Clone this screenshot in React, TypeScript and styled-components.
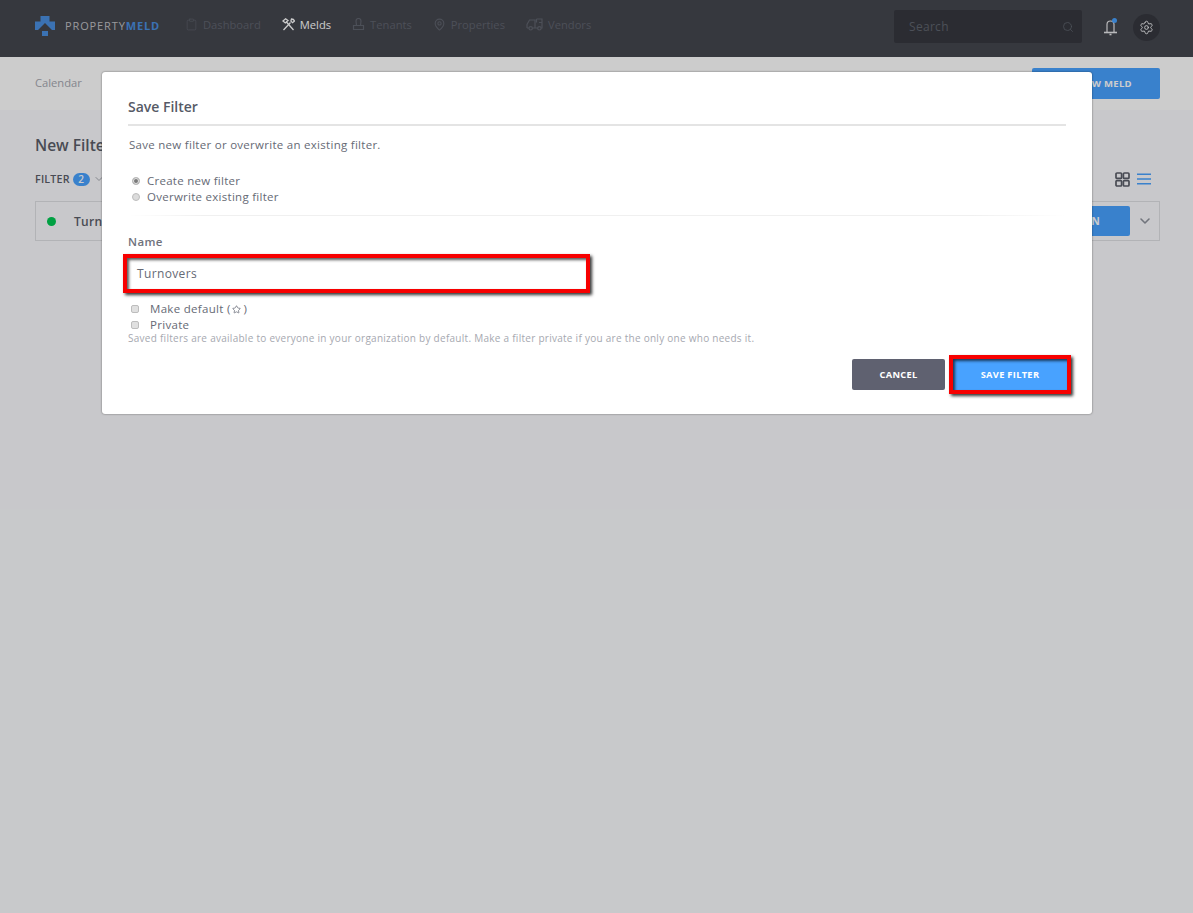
import * as React from "react";
import styled, { createGlobalStyle } from "styled-components";
import { Search, Settings, ChevronDown, MapPin, Clipboard, Star } from "lucide-react";

const Global = createGlobalStyle`
  html, body { margin: 0; padding: 0; }
  body {
    font-family: "Open Sans", "Noto Sans", sans-serif;
    background: #fafbfe;
    min-height: 913px;
    overflow: hidden;
  }
  * { box-sizing: border-box; }
`;

const Page = styled.div`
  position: relative;
  height: 913px;
`;

const Header = styled.header`
  height: 57px;
  background: #44464e;
  display: flex;
  align-items: center;
  padding: 0 33px 8px 35px;
`;

const Brand = styled.div`
  display: flex;
  align-items: center;
  width: 150px;
  gap: 10px;
  margin-top: 2px;
  color: #c0c0c4;
  font-size: 11px;
  letter-spacing: 0.88px;
  white-space: nowrap;
  b {
    color: #4a8fe0;
    font-weight: 700;
  }
`;

const Nav = styled.nav`
  display: flex;
  align-items: center;
  gap: 21px;
  flex: 1;
`;

const NavItem = styled.a<{ $active?: boolean }>`
  display: flex;
  align-items: center;
  gap: 5px;
  font-size: 11.2px;
  color: ${p => (p.$active ? "#ffffff" : "#60646e")};
  svg { color: ${p => (p.$active ? "#ffffff" : "#60646e")}; }
`;

const SearchBox = styled.div`
  width: 188px;
  height: 33px;
  background: #36383f;
  border-radius: 2px;
  display: flex;
  align-items: center;
  justify-content: space-between;
  padding: 0 8px 0 15px;
  margin: 4px 21px 0 0;
  font-size: 12px;
  letter-spacing: 0.3px;
  color: #60646e;
`;

const BellWrap = styled.div`
  position: relative;
  display: flex;
  margin: 4px 15px 0 0;
  color: #e8e8ea;
  i {
    position: absolute;
    top: 0;
    right: 1px;
    width: 5px;
    height: 5px;
    border-radius: 50%;
    background: #48a2ff;
  }
`;

const GearButton = styled.div`
  width: 27px;
  height: 27px;
  margin-top: 5px;
  border-radius: 50%;
  background: #36383f;
  color: #f0f0f2;
  display: flex;
  align-items: center;
  justify-content: center;
`;

const SubBar = styled.div`
  height: 53px;
  background: #ffffff;
  display: flex;
  align-items: flex-start;
  justify-content: space-between;
  padding: 11px 33px 0 35px;
`;

const SubLink = styled.span`
  font-size: 11.2px;
  line-height: 29px;
  color: #a6a8b0;
`;

const PrimaryButton = styled.div`
  background: #48a2ff;
  color: #fff;
  border-radius: 2px;
  font-size: 9.5px;
  font-weight: 700;
  letter-spacing: 0.3px;
  display: flex;
  align-items: center;
  justify-content: center;
`;

const NewMeld = styled(PrimaryButton)`
  width: 128px;
  height: 31px;
  padding-left: 18px;
`;

const Main = styled.main`
  padding: 26px 33px 0 35px;
`;

const Title = styled.h1`
  margin: 0;
  font-size: 15.5px;
  line-height: 18px;
  font-weight: 600;
  color: #5b5e69;
`;

const FilterRow = styled.div`
  display: flex;
  align-items: center;
  justify-content: space-between;
  margin-top: 16px;
  height: 18px;
`;

const FilterLabel = styled.div`
  display: flex;
  align-items: center;
  gap: 3px;
  font-size: 10.7px;
  font-weight: 600;
  color: #5b5e69;
  letter-spacing: 0.2px;
  svg { color: #a6a8b0; }
`;

const CountBadge = styled.span`
  width: 17px;
  height: 13px;
  border-radius: 7px;
  background: #48a2ff;
  color: #fff;
  font-size: 10px;
  font-weight: 600;
  display: flex;
  align-items: center;
  justify-content: center;
`;

const Views = styled.div`
  display: flex;
  align-items: center;
  gap: 7px;
  margin-right: 9px;
`;

const MeldRow = styled.div`
  height: 40px;
  margin-top: 13px;
  border: 1px solid #dfe0e4;
  display: flex;
  align-items: center;
  padding: 0 6px 0 11px;
`;

const StatusDot = styled.i`
  width: 9px;
  height: 9px;
  border-radius: 50%;
  background: #00c853;
  margin-right: 18px;
`;

const MeldName = styled.span`
  flex: 1;
  font-size: 12px;
  font-weight: 600;
  letter-spacing: 0.3px;
  color: #5b5e69;
`;

const AssignButton = styled(PrimaryButton)`
  width: 96px;
  height: 30px;
  margin-right: 7px;
  padding-right: 4px;
  font-size: 10.5px;
`;

const Overlay = styled.div`
  position: absolute;
  inset: 0;
  background: rgba(0, 0, 0, 0.2);
`;

const Modal = styled.section`
  position: absolute;
  left: 102px;
  top: 72px;
  width: 990px;
  height: 342px;
  background: #fff;
  border-radius: 3px;
  box-shadow: 0 0 2px rgba(0, 0, 0, 0.55);
  padding: 25px 26px 0;
  color: #666a75;
`;

const ModalTitle = styled.h2`
  margin: 0;
  height: 29px;
  font-size: 14px;
  line-height: 19px;
  font-weight: 600;
  color: #565a66;
  border-bottom: 2px solid #e4e4e4;
`;

const Lead = styled.p`
  margin: 11px 0 0 1px;
  font-size: 11.5px;
  line-height: 16px;
  letter-spacing: 0.28px;
`;

const Options = styled.div`
  margin: 19px 0 0 4px;
`;

const Choice = styled.label`
  display: flex;
  align-items: center;
  height: 16px;
  gap: 7px;
  font-size: 11.5px;
  letter-spacing: 0.27px;
`;

const RadioMark = styled.span<{ $on?: boolean }>`
  width: 8px;
  height: 8px;
  margin-top: 2px;
  border-radius: 50%;
  background: ${p => (p.$on ? "#7a7a7a" : "#dcdcdc")};
  border: 1px solid #bdbdbd;
  box-shadow: ${p => (p.$on ? "inset 0 0 0 1px #e4e4e4" : "none")};
`;

const Divider = styled.hr`
  margin: 11px 0 0;
  border: 0;
  height: 1px;
  background: linear-gradient(90deg, #fff, #f0f0f0 8%, #f0f0f0 90%, #fff);
`;

const FieldLabel = styled.div`
  margin-top: 19px;
  font-size: 11.5px;
  line-height: 14px;
  font-weight: 600;
  letter-spacing: 0.4px;
  color: #6f727c;
`;

const Highlight = styled.div`
  border: 4px solid #f70000;
  box-shadow: 2px 2px 3px rgba(0, 0, 0, 0.8), inset 2px 2px 3px rgba(0, 0, 0, 0.65);
`;

const NameField = styled(Highlight)`
  width: 467px;
  height: 39px;
  margin: 5px 0 0 -5px;
  padding-left: 10px;
  display: flex;
  align-items: center;
  font-size: 12px;
  letter-spacing: 0.35px;
`;

const Checks = styled.div`
  margin-top: 7px;
`;

const CheckRow = styled.label`
  display: flex;
  align-items: center;
  height: 16px;
  gap: 11px;
  padding-left: 3px;
  font-size: 11.5px;
  letter-spacing: 0.3px;
  svg { margin: 0 3px 0 1px; vertical-align: -1px; }
`;

const CheckMark = styled.span`
  width: 8px;
  height: 8px;
  margin-top: 2px;
  border-radius: 2px;
  background: #e0e0e0;
  border: 1px solid #bdbdbd;
`;

const Hint = styled.p`
  margin: 0;
  font-size: 10px;
  line-height: 12px;
  letter-spacing: 0.27px;
  white-space: nowrap;
  color: #a6a8b0;
`;

const Actions = styled.div`
  display: flex;
  justify-content: flex-end;
  align-items: center;
  gap: 4px;
  margin: 11px -5px 0 0;
`;

const CancelButton = styled.div`
  width: 93px;
  height: 31px;
  border-radius: 2px;
  background: #5f6170;
  color: #fff;
  font-size: 9.3px;
  font-weight: 700;
  letter-spacing: 0.3px;
  display: flex;
  align-items: center;
  justify-content: center;
`;

const SaveButton = styled(Highlight)`
  width: 122px;
  height: 39px;
  background: #48a2ff;
  color: #fff;
  font-size: 9.3px;
  font-weight: 700;
  letter-spacing: 0.3px;
  display: flex;
  align-items: center;
  justify-content: center;
`;

const Logo = () => (
  <svg width="20" height="20" viewBox="0 0 20 20" fill="#4a8fe0">
    <path d="M5.5 0h9v5.5H20V14h-3l-7-7-7 7H0V5.5h5.5z" />
    <rect x="7" y="15" width="6" height="5" />
  </svg>
);

const ToolsIcon = () => (
  <svg width="13" height="13" viewBox="0 0 13 13" fill="none" stroke="currentColor" strokeWidth="1.3">
    <path d="M1.5 12 8.5 4.5M9.5 1c1.5 0 2.5.6 3 2l-2 1.7-1.6-1.6z" />
    <path d="M11.5 12 4 3.5M1 3l2.6-2.2L6 2.6 3.3 5z" />
  </svg>
);

const TenantIcon = () => (
  <svg width="13" height="13" viewBox="0 0 13 13" fill="none" stroke="currentColor" strokeWidth="1.2">
    <path d="M4.5 7.5 4 3a2.5 2.5 0 0 1 5 0l-.5 4.5M1.5 7.5h10v4h-10z" />
  </svg>
);

const TruckIcon = () => (
  <svg width="17" height="13" viewBox="0 0 17 13" fill="none" stroke="currentColor" strokeWidth="1.2">
    <path d="M1 10V6.5L3.5 2H9v8H6.5M3 10H1M12 10H9M10.5 1H16v9h-1M10.5 1v3.5M13 4.5h3" />
    <circle cx="4.7" cy="10.3" r="1.7" />
    <circle cx="13.4" cy="10.3" r="1.7" />
  </svg>
);

const BellIcon = () => (
  <svg width="15" height="18" viewBox="0 0 15 18" fill="none" stroke="currentColor" strokeWidth="1.2">
    <path d="M4 14V6.5C4 4.5 5.4 3 7.5 3S11 4.5 11 6.5V14" />
    <path d="M1 14.5h13" strokeWidth="1.6" />
    <path d="M6.5 16.5h2" strokeWidth="1.6" />
  </svg>
);

const GridIcon = () => (
  <svg width="15" height="15" viewBox="0 0 15 15" fill="none" stroke="#5b5e69" strokeWidth="1.7">
    <rect x="1" y="1" width="5.6" height="5.4" rx="1" />
    <rect x="8.4" y="1" width="5.6" height="5.4" rx="1" />
    <rect x="1" y="8.6" width="5.6" height="5.4" rx="1" />
    <rect x="8.4" y="8.6" width="5.6" height="5.4" rx="1" />
  </svg>
);

const ListIcon = () => (
  <svg width="14" height="12" viewBox="0 0 14 12" fill="none" stroke="#48a2ff" strokeWidth="1.5">
    <path d="M0 1.2h14M0 6h14M0 10.8h14" />
  </svg>
);

export default function App() {
  return (
    <Page>
      <Global />
      <Header>
        <Brand>
          <Logo />
          <span>
            PROPERTY<b>MELD</b>
          </span>
        </Brand>
        <Nav>
          <NavItem><Clipboard size={13} strokeWidth={1.2} />Dashboard</NavItem>
          <NavItem $active><ToolsIcon />Melds</NavItem>
          <NavItem><TenantIcon />Tenants</NavItem>
          <NavItem><MapPin size={13} strokeWidth={2} />Properties</NavItem>
          <NavItem><TruckIcon />Vendors</NavItem>
        </Nav>
        <SearchBox>
          Search
          <Search size={12} strokeWidth={1.6} />
        </SearchBox>
        <BellWrap>
          <BellIcon />
          <i />
        </BellWrap>
        <GearButton>
          <Settings size={15} strokeWidth={1.5} />
        </GearButton>
      </Header>
      <SubBar>
        <SubLink>Calendar</SubLink>
        <NewMeld>NEW MELD</NewMeld>
      </SubBar>
      <Main>
        <Title>New Filter</Title>
        <FilterRow>
          <FilterLabel>
            FILTER <CountBadge>2</CountBadge>
            <ChevronDown size={12} />
          </FilterLabel>
          <Views>
            <GridIcon />
            <ListIcon />
          </Views>
        </FilterRow>
        <MeldRow>
          <StatusDot />
          <MeldName>Turnovers</MeldName>
          <AssignButton>ASSIGN</AssignButton>
          <ChevronDown size={16} color="#8e929c" strokeWidth={2.4} />
        </MeldRow>
      </Main>
      <Overlay />
      <Modal>
        <ModalTitle>Save Filter</ModalTitle>
        <Lead>Save new filter or overwrite an existing filter.</Lead>
        <Options>
          <Choice><RadioMark $on />Create new filter</Choice>
          <Choice><RadioMark />Overwrite existing filter</Choice>
        </Options>
        <Divider />
        <FieldLabel>Name</FieldLabel>
        <NameField>Turnovers</NameField>
        <Checks>
          <CheckRow>
            <CheckMark />
            <span>
              Make default (<Star size={9} strokeWidth={2} />)
            </span>
          </CheckRow>
          <CheckRow><CheckMark />Private</CheckRow>
        </Checks>
        <Hint>Saved filters are available to everyone in your organization by default. Make a filter private if you are the only one who needs it.</Hint>
        <Actions>
          <CancelButton>CANCEL</CancelButton>
          <SaveButton>SAVE FILTER</SaveButton>
        </Actions>
      </Modal>
    </Page>
  );
}
